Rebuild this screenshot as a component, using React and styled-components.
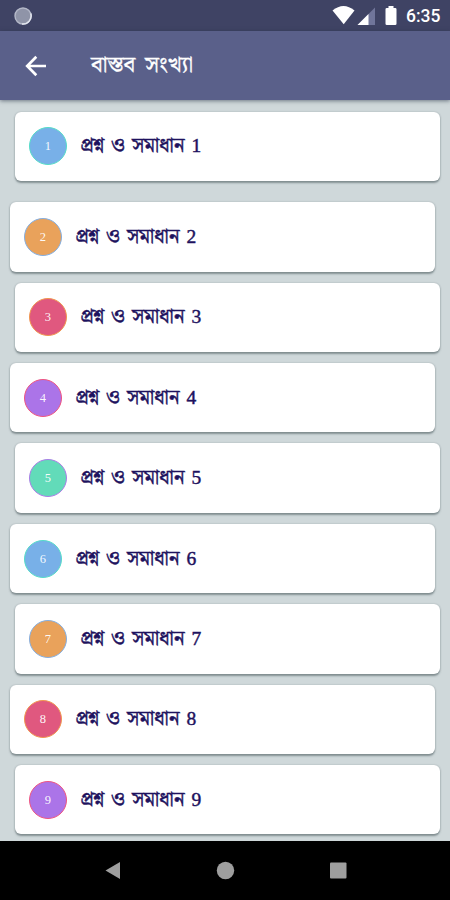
import React from "react";
import styled, { createGlobalStyle } from "styled-components";

const Global = createGlobalStyle`
  * { box-sizing: border-box; }
  body { margin: 0; background: #cfd8da; }
`;

const bengali = `"Liberation Serif", "Noto Serif Bengali", "Noto Sans Bengali", "Lohit Bengali", serif`;

const Screen = styled.div`
  width: 450px;
  height: 900px;
  display: flex;
  flex-direction: column;
  overflow: hidden;
  background: #cfd8da;
`;

const StatusBar = styled.div`
  flex: none;
  height: 31px;
  padding: 0 9px 0 14px;
  display: flex;
  align-items: center;
  justify-content: space-between;
  background: #3f4364;
`;

const StatusIcons = styled.svg`
  display: block;
  margin-left: auto;
`;

const Clock = styled.span`
  width: 35px;
  margin-left: 8px;
  padding-top: 1px;
  font: 500 17.5px/20px Roboto, sans-serif;
  color: #fff;
  white-space: nowrap;
`;

const AppBar = styled.header`
  flex: none;
  z-index: 1;
  height: 69px;
  padding-left: 25px;
  display: flex;
  align-items: center;
  background: #5a608a;
  box-shadow: 0 1px 4px rgba(30, 40, 60, 0.55);
`;

const Title = styled.h1`
  margin: 0 0 2px 44px;
  font: 400 23px/30px ${bengali};
  word-spacing: 4px;
  color: #fff;
  -webkit-text-stroke: 0.3px #fff;
  white-space: nowrap;
`;

const List = styled.main`
  flex: 1;
  min-height: 0;
  padding: 11.5px 10px 0 10.4px;
  overflow: hidden;
`;

const Card = styled.article`
  width: 425px;
  height: 69.4px;
  margin-left: ${(p) => (p.$shifted ? 5 : 0)}px;
  margin-bottom: ${(p) => p.$gap}px;
  padding-left: 13.6px;
  display: flex;
  align-items: center;
  background: #fff;
  border-radius: 6px;
  box-shadow: 0 1.5px 2px rgba(60, 75, 80, 0.5), 0 0 2px rgba(60, 75, 80, 0.2);
`;

const Badge = styled.div`
  flex: none;
  width: 38px;
  height: 38px;
  display: flex;
  align-items: center;
  justify-content: center;
  border: 1.5px solid ${(p) => p.$ring};
  border-radius: 50%;
  background: ${(p) => p.$fill};
  font: 400 12.5px/14px ${bengali};
  color: rgba(255, 255, 255, 0.95);
`;

const Label = styled.h2`
  margin: 0 0 1px 13.5px;
  display: flex;
  align-items: baseline;
  font: 400 20px/28px ${bengali};
  color: #1e125e;
  -webkit-text-stroke: 0.45px #1e125e;
  white-space: nowrap;
`;

const Phrase = styled.span`
  width: 111px;
  word-spacing: 2px;
`;

const Numeral = styled.span`
  font-size: 19.5px;
`;

const NavBar = styled.nav`
  flex: none;
  height: 59px;
  display: flex;
  background: #000;
`;

const palette = [
  ["#78b0e8", "#55dcc8"],
  ["#e9a25b", "#84aee0"],
  ["#e0587f", "#f0964f"],
  ["#ab74e8", "#ef5480"],
  ["#62dbb9", "#a97de6"],
];

export default function App() {
  return (
    <>
      <Global />
      <Screen>
        <StatusBar>
          <svg width="18" height="18" viewBox="0 0 18 18">
            <circle cx="9" cy="9" r="8" fill="#8f94a8" stroke="#b4b8c8" strokeWidth="1.4" />
            <path d="M16.8 6.5A8.2 8.2 0 0 1 8 17" fill="none" stroke="#e2e5ee" strokeWidth="1.5" />
          </svg>
          <StatusIcons width="66" height="21" viewBox="332 5 66 21" fill="#fff">
            <path d="M332.5 10.5Q343.5 1.5 354.5 10.5L343.7 24.3Z" />
            <path d="M375 7.5V25H357.5Z" fill="#70759a" />
            <path d="M368.5 14V25H357.5Z" />
            <path d="M388.5 6h5V8h1.700q1.300 0 1.300 1.300v14.400q0 1.300-1.300 1.300h-8.400q-1.300 0-1.300-1.300V9.300q0-1.300 1.300-1.300h1.700z" />
          </StatusIcons>
          <Clock>6:35</Clock>
        </StatusBar>
        <AppBar>
          <svg width="22" height="22" viewBox="0 0 22 22" fill="none" stroke="#fff" strokeWidth="2.7">
            <path d="M21 11H3M11.300 1.800L2.200 11l9.100 9.200" />
          </svg>
          <Title>বাস্তব সংখ্যা</Title>
        </AppBar>
        <List>
          {Array.from({ length: 9 }, (_, i) => (
            <Card key={i} $shifted={i % 2 === 0} $gap={i === 0 ? 21.4 : 11}>
              <Badge $fill={palette[i % 5][0]} $ring={palette[i % 5][1]}>{i + 1}</Badge>
              <Label>
                <Phrase>প্রশ্ন ও সমাধান</Phrase>
                <Numeral>{i + 1}</Numeral>
              </Label>
            </Card>
          ))}
        </List>
        <NavBar>
          <svg width="450" height="59" viewBox="0 841 450 59" fill="#9e9e9e">
            <path d="M105.500 870.500L120 862V879Z" />
            <circle cx="225.500" cy="870.500" r="8.700" />
            <rect x="330" y="862.500" width="16.500" height="16" rx="1" />
          </svg>
        </NavBar>
      </Screen>
    </>
  );
}
